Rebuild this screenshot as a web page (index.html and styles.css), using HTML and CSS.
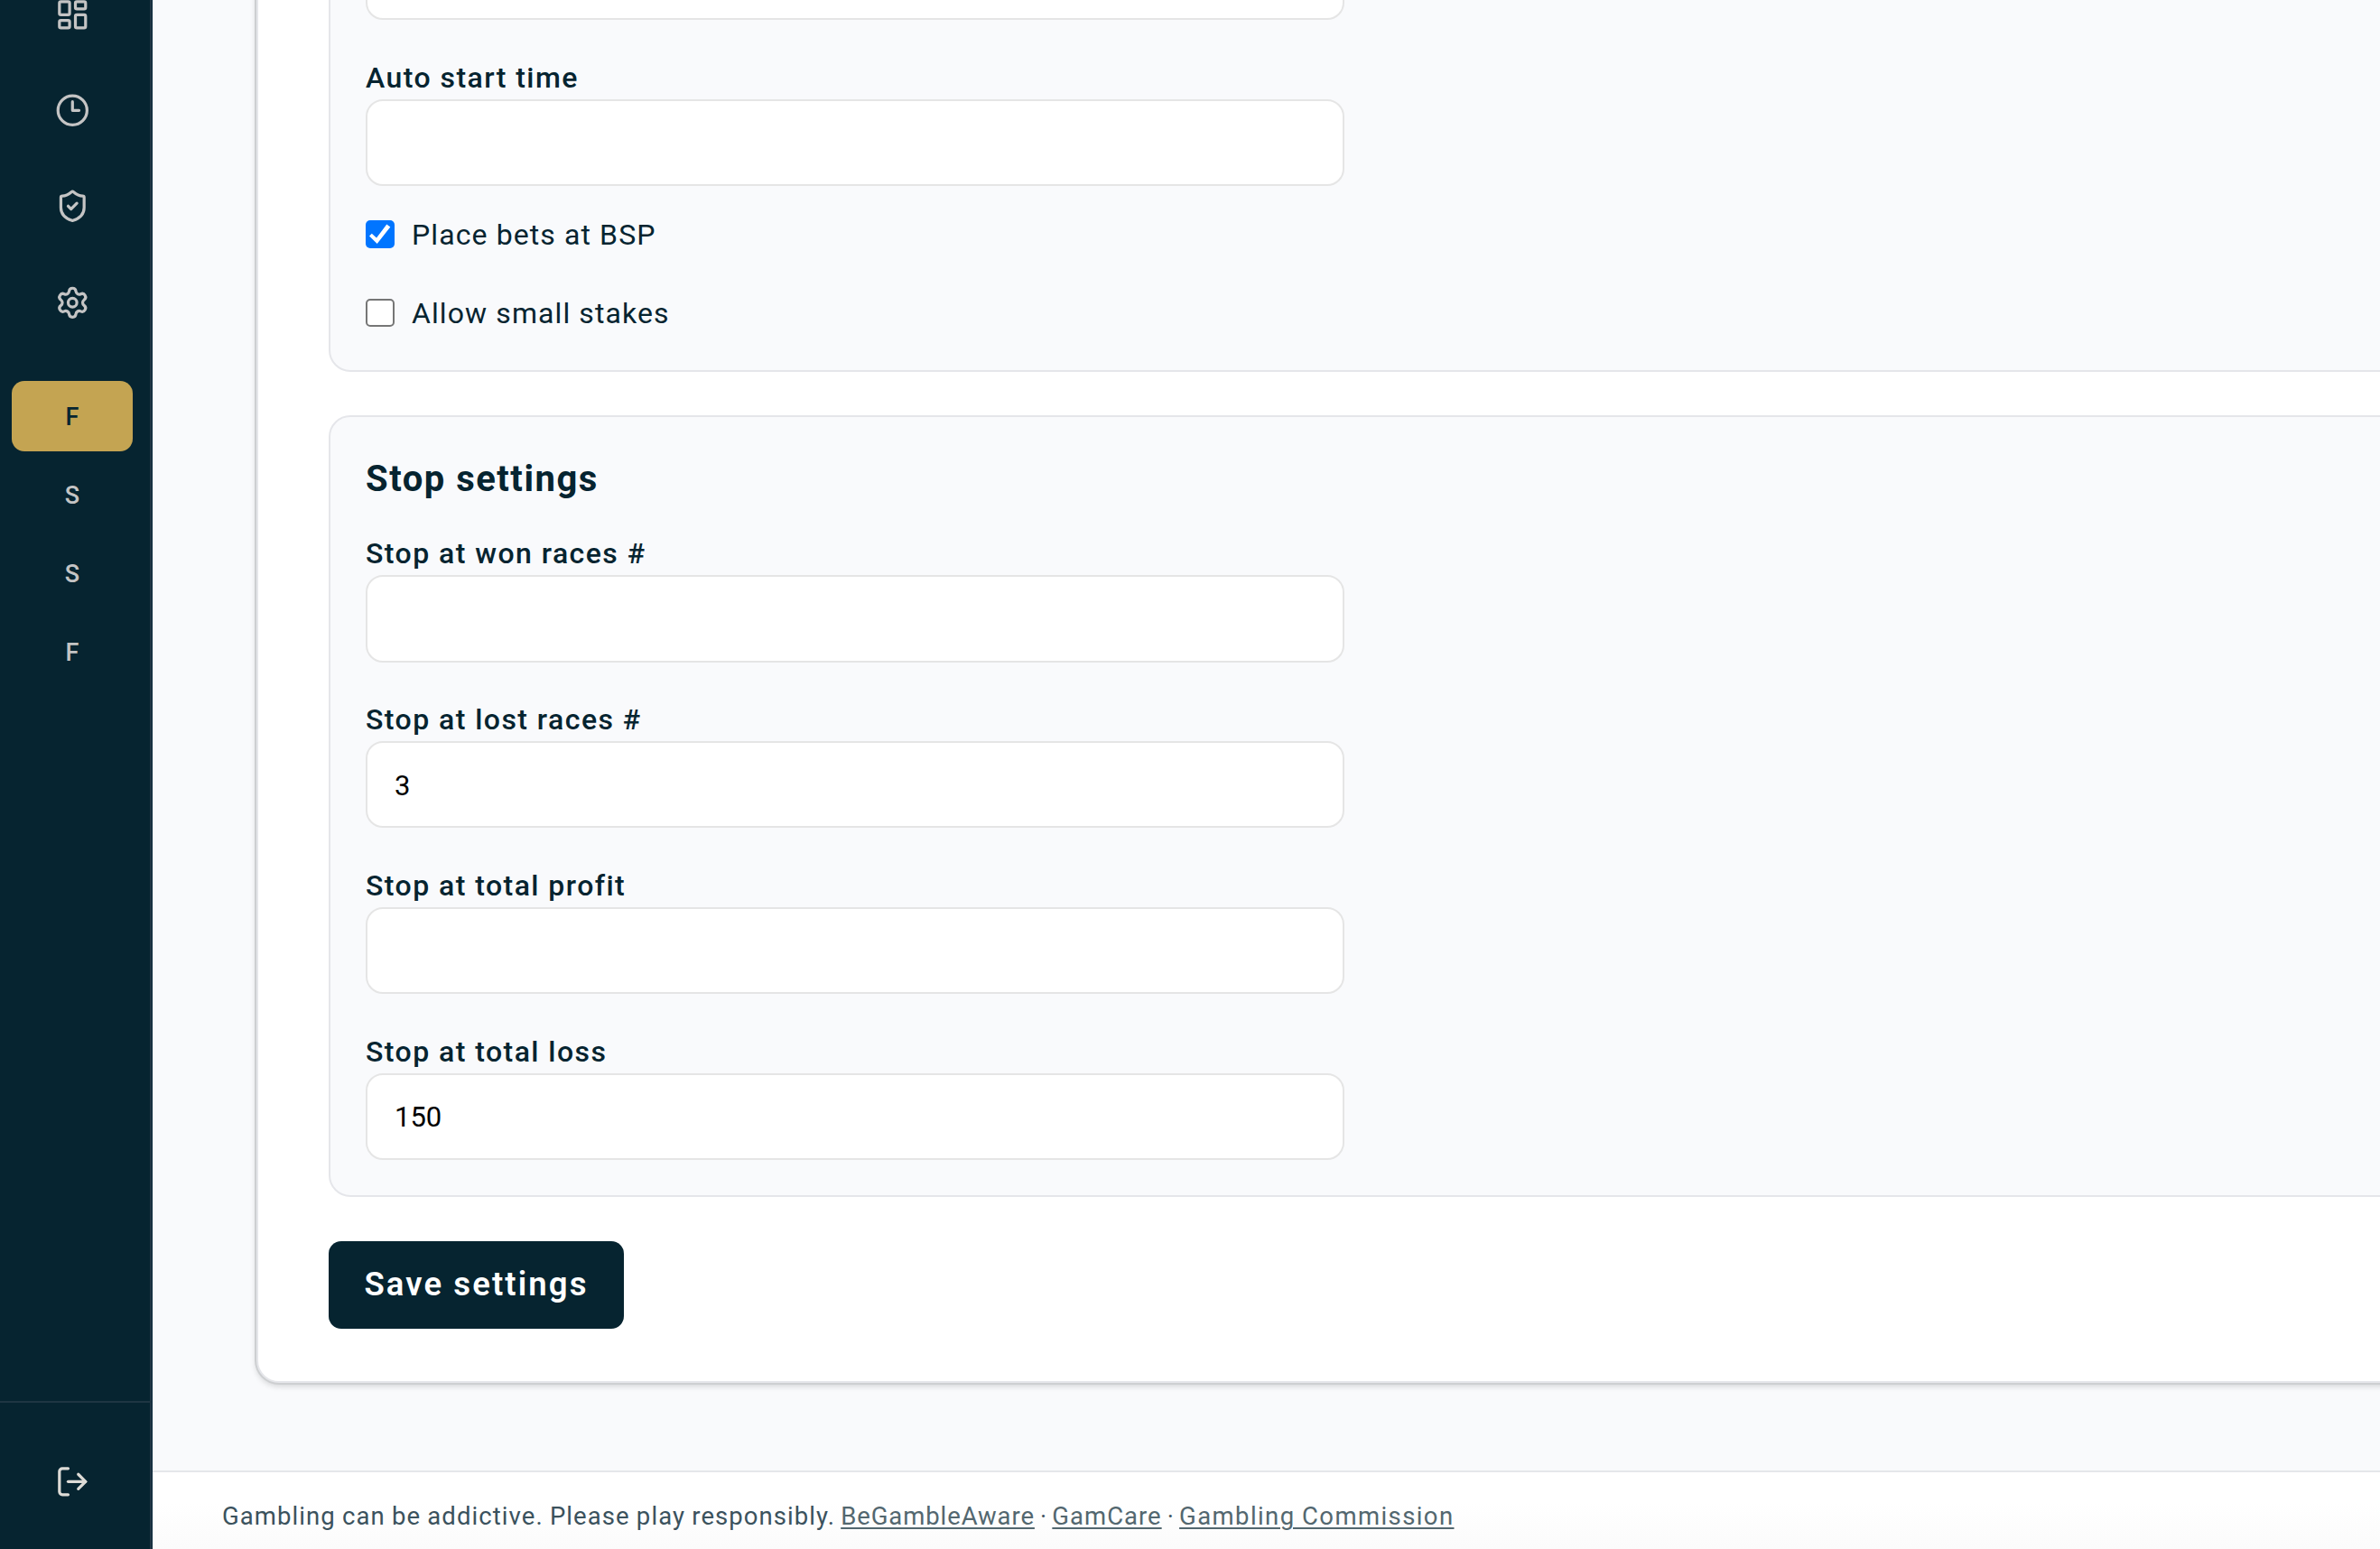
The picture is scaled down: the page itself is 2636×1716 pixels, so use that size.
FILE: index.html
```
<!DOCTYPE html>
<html lang="en">
<head>
  <meta charset="UTF-8">
  <meta name="viewport" content="width=device-width, initial-scale=1.0">
  <title>Settings</title>
  <link rel="stylesheet" href="styles.css">
</head>
<body>
  <aside class="sidebar">
    <nav class="menu">
      <a class="menu-icon" href="#">
        <svg viewBox="0 0 24 24"><rect x="3" y="3" width="7" height="9" rx="1"/><rect x="14" y="3" width="7" height="5" rx="1"/><rect x="14" y="12" width="7" height="9" rx="1"/><rect x="3" y="16" width="7" height="5" rx="1"/></svg>
      </a>
      <a class="menu-icon" href="#">
        <svg viewBox="0 0 24 24"><circle cx="12" cy="12" r="10"/><path d="M12 6v6h4.5"/></svg>
      </a>
      <a class="menu-icon" href="#">
        <svg viewBox="0 0 24 24"><path d="M20 13c0 5-3.5 7.5-7.66 8.95a1 1 0 0 1-.67-.01C7.5 20.5 4 18 4 13V6a1 1 0 0 1 1-1c2 0 4.5-1.2 6.24-2.72a1.17 1.17 0 0 1 1.52 0C14.51 3.81 17 5 19 5a1 1 0 0 1 1 1z"/><path d="m9 12 2 2 4-4"/></svg>
      </a>
      <a class="menu-icon" href="#">
        <svg viewBox="0 0 24 24"><path d="M9.671 4.136a2.34 2.34 0 0 1 4.659 0 2.34 2.34 0 0 0 3.319 1.915 2.34 2.34 0 0 1 2.33 4.033 2.34 2.34 0 0 0 0 3.831 2.34 2.34 0 0 1-2.33 4.033 2.34 2.34 0 0 0-3.319 1.915 2.34 2.34 0 0 1-4.659 0 2.34 2.34 0 0 0-3.32-1.915 2.34 2.34 0 0 1-2.33-4.033 2.34 2.34 0 0 0 0-3.831A2.34 2.34 0 0 1 6.35 6.051a2.34 2.34 0 0 0 3.319-1.915"/><circle cx="12" cy="12" r="3"/></svg>
      </a>
    </nav>
    <nav class="bots">
      <a class="bot active" href="#">F</a>
      <a class="bot" href="#">S</a>
      <a class="bot" href="#">S</a>
      <a class="bot" href="#">F</a>
    </nav>
    <a class="logout" href="#">
      <svg viewBox="0 0 24 24"><path d="m16 17 5-5-5-5"/><path d="M21 12H9"/><path d="M9 21H5a2 2 0 0 1-2-2V5a2 2 0 0 1 2-2h4"/></svg>
    </a>
  </aside>

  <div class="page">
    <main class="content">
      <form class="card">
        <section class="panel start">
          <div class="field">
            <input type="text">
          </div>
          <div class="field">
            <label for="autoStart">Auto start time</label>
            <input type="text" id="autoStart">
          </div>
          <label class="check"><input type="checkbox" checked> Place bets at BSP</label>
          <label class="check"><input type="checkbox"> Allow small stakes</label>
        </section>

        <section class="panel stop">
          <h2>Stop settings</h2>
          <div class="field">
            <label for="wonRaces">Stop at won races #</label>
            <input type="text" id="wonRaces">
          </div>
          <div class="field">
            <label for="lostRaces">Stop at lost races #</label>
            <input type="text" id="lostRaces" value="3">
          </div>
          <div class="field">
            <label for="totalProfit">Stop at total profit</label>
            <input type="text" id="totalProfit">
          </div>
          <div class="field">
            <label for="totalLoss">Stop at total loss</label>
            <input type="text" id="totalLoss" value="150">
          </div>
        </section>

        <button type="button" class="save">Save settings</button>
      </form>
    </main>

    <footer class="footer">
      <span>Gambling can be addictive. Please play responsibly.</span>
      <a href="#">BeGambleAware</a> ·
      <a href="#">GamCare</a> ·
      <a href="#">Gambling Commission</a>
    </footer>
  </div>
</body>
</html>
```
FILE: styles.css
```
* {
  box-sizing: border-box;
}
body {
  display: flex;
  height: 1716px;
  margin: 0;
  overflow: hidden;
  font-family: Roboto, "Liberation Sans", sans-serif;
  color: #062430;
  background-color: #f9fafc;
}

/* Sidebar */
.sidebar {
  display: flex;
  flex-direction: column;
  flex: none;
  width: 169px;
  background-color: #062430;
  border-right: 1px solid #082638;
  box-shadow: inset -2px 0 #213746;
}
.sidebar svg {
  width: 38.6px;
  height: 38.6px;
  fill: none;
  stroke: #c4c4c4;
  stroke-width: 2;
  stroke-linecap: round;
  stroke-linejoin: round;
}
.menu {
  display: flex;
  flex-direction: column;
  margin-top: -37px;
  padding: 0 21px 0 13px;
}
.menu-icon {
  display: flex;
  align-items: center;
  justify-content: center;
  height: 106.3px;
}
.bots {
  display: flex;
  flex-direction: column;
  gap: 9.4px;
  margin-top: 34px;
  padding: 0 21px 0 13px;
}
.bot {
  height: 77.6px;
  border-radius: 14px;
  color: #c4c4c4;
  font-size: 27px;
  font-weight: 500;
  line-height: 81px;
  text-align: center;
  text-decoration: none;
}
.bot.active {
  background-color: #c4a452;
  color: #062430;
}
.logout {
  display: flex;
  align-items: center;
  justify-content: center;
  height: 164px;
  margin-top: auto;
  padding: 12px 8px 0 0;
  border-top: 2px solid #1e3643;
}
.sidebar .logout svg {
  stroke: #dddbd6;
}

/* Content */
.page {
  display: flex;
  flex: 1;
  flex-direction: column;
  justify-content: flex-end;
  min-width: 0;
  overflow: hidden;
}
.content {
  padding: 0 0 97.5px 115px;
}
.card {
  width: 2600px;
  padding: 0 78px 58px;
  background-color: #fff;
  border: 2.5px solid #e5e6ea;
  border-radius: 25px;
  box-shadow: 0 0 0 2px #cdcfd1, 0 3px 6px 1px rgba(0, 0, 0, 0.14);
}
.panel {
  padding: 39px;
  background-color: #f9fafc;
  border: 2px solid #e5e6ea;
  border-radius: 24px;
}
.start {
  padding-bottom: 20px;
}
.stop {
  margin-top: 48px;
}
h2 {
  margin: 0 0 32px;
  font-size: 40px;
  font-weight: 700;
  letter-spacing: 1.5px;
  line-height: 59px;
}
.field {
  width: 1084px;
  margin-bottom: 42.3px;
}
.start .field:nth-child(2) {
  margin-bottom: 10px;
}
.stop .field:last-child {
  margin-bottom: 0;
}
.field label {
  display: block;
  margin-bottom: 3px;
  font-size: 32px;
  font-weight: 500;
  letter-spacing: 1.45px;
  line-height: 42px;
}
.field input {
  display: block;
  width: 100%;
  height: 96.5px;
  padding: 2px 30px 0;
  background-color: #fff;
  border: 2px solid #e5e5e5;
  border-radius: 19px;
  color: #000;
  font-family: inherit;
  font-size: 31px;
}
.check {
  display: flex;
  align-items: center;
  gap: 19px;
  height: 87px;
  font-size: 32px;
  letter-spacing: 1.1px;
}
.check input {
  appearance: none;
  width: 32px;
  height: 31px;
  margin: 0;
  background-color: #fff;
  border: 2px solid #767676;
  border-radius: 5px;
}
.check input:checked {
  background-color: #0075ff;
  border: none;
}
.check input:checked::before {
  content: "";
  display: block;
  width: 32px;
  height: 31px;
  background-color: #fff;
  clip-path: polygon(4px 17.3px, 6.8px 14.7px, 12px 19.5px, 23.3px 4.5px, 27.3px 7.3px, 12.7px 26px);
}
.save {
  display: block;
  width: 327px;
  height: 97px;
  margin-top: 48.5px;
  padding: 0 0 2px;
  border: none;
  border-radius: 14px;
  background-color: #062430;
  color: #fff;
  font-family: inherit;
  font-size: 36.5px;
  font-weight: 600;
  letter-spacing: 2.1px;
}

/* Footer */
.footer {
  flex: none;
  height: 87px;
  padding-left: 77px;
  border-top: 2px solid #e5e7ea;
  background: linear-gradient(#fff 40%, #fbfbfb);
  color: #3b525d;
  font-size: 27.5px;
  line-height: 98px;
  word-spacing: -0.7px;
}
.footer span,
.footer a {
  letter-spacing: 1px;
}
.footer span {
  letter-spacing: 1.07px;
}
.footer a {
  color: #53676f;
  text-underline-offset: 3px;
  text-decoration-thickness: 2px;
}
.footer a:first-of-type {
  letter-spacing: 0.9px;
}
.footer a:last-child {
  letter-spacing: 1.4px;
}
```
